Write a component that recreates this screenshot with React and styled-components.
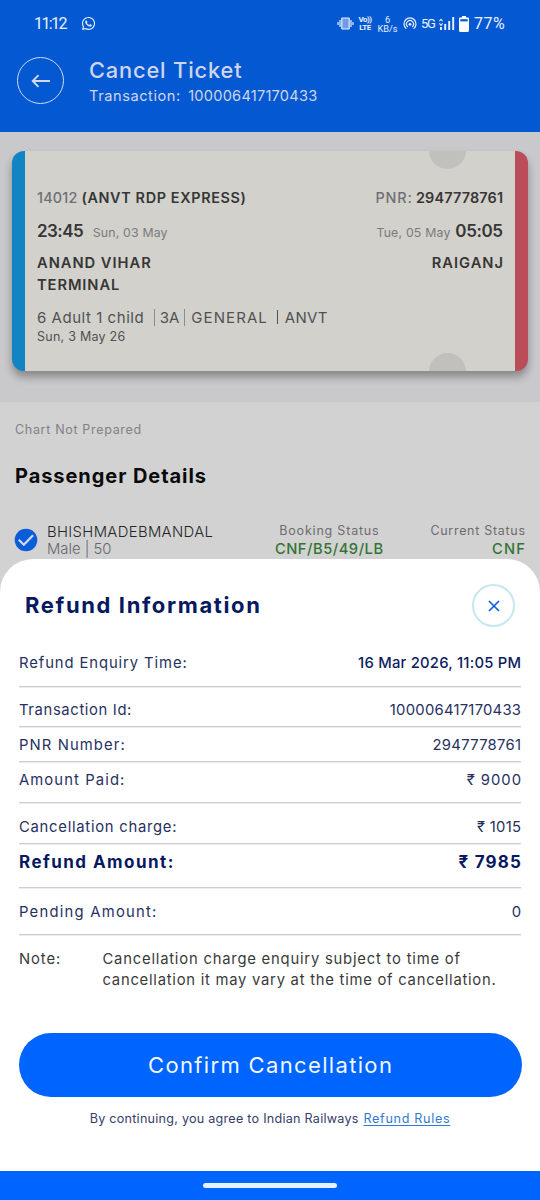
import React from 'react'
import styled, { createGlobalStyle } from 'styled-components'
import { FaWhatsapp } from 'react-icons/fa'

const GlobalStyle = createGlobalStyle`
    * {
        box-sizing: border-box;
    }
    body {
        margin: 0;
        background: #fff;
        font-family: 'Inter', sans-serif;
    }
`

const Screen = styled.div`
    position: relative;
    width: 540px;
    height: 1200px;
    overflow: hidden;
    background: #d2d2d2;
`

const Text = styled.span`
    font-size: ${props => props.$size || 14.8}px;
    font-weight: ${props => props.$weight || 400};
    letter-spacing: ${props => props.$ls || 0}px;
    margin-right: ${props => -(props.$ls || 0)}px;
    color: ${props => props.$color || 'inherit'};
    white-space: pre;
`

/* header */

const Header = styled.header`
    height: 132px;
    background: #0459d2;
    color: #cfd5ea;
`

const StatusBar = styled.div`
    height: 47px;
    padding: 0 35px 0 34px;
    display: flex;
    align-items: center;
    justify-content: space-between;
    color: #e9f1ff;
`

const StatusGroup = styled.div`
    display: flex;
    align-items: center;
    gap: ${props => props.$gap}px;
    svg {
        display: block;
    }
`

const StatusText = styled.span`
    font-family: 'Roboto', sans-serif;
    font-size: ${props => props.$size}px;
    letter-spacing: ${props => props.$ls || 0}px;
    width: ${props => props.$width}px;
    white-space: nowrap;
`

const Stacked = styled.div`
    display: flex;
    flex-direction: column;
    align-items: center;
    width: ${props => props.$width}px;
    font: ${props => props.$weight || 400} ${props => props.$size}px/${props => props.$line}px 'Roboto', sans-serif;
    letter-spacing: ${props => props.$ls || 0}px;
    white-space: nowrap;
`

const TitleBar = styled.div`
    display: flex;
    align-items: center;
    padding: 8px 0 0 17px;
    gap: 25px;
`

const BackButton = styled.button`
    width: 47px;
    height: 47px;
    margin-bottom: 1px;
    padding: 0;
    border: 1.5px solid #cfd9f0;
    border-radius: 50%;
    background: none;
    display: grid;
    place-items: center;
`

const TitleText = styled.div`
    display: flex;
    flex-direction: column;
`

const Title = styled.h1`
    margin: 0;
    font-size: 21.8px;
    font-weight: 500;
    line-height: 30px;
    letter-spacing: .85px;
`

const Subtitle = styled.div`
    display: flex;
    gap: 8px;
    line-height: 22px;
`

/* ticket */

const TicketArea = styled.section`
    height: 270px;
    padding: 19px 12px 0;
    background: #c9c9cb;
`

const Ticket = styled.div`
    position: relative;
    height: 220px;
    padding: 35px 12px 0;
    border-left: 13px solid #1283c3;
    border-right: 13px solid #ba4d59;
    border-radius: 12px;
    background: #d2d1cc;
    background-clip: padding-box;
    box-shadow: 0 6px 9px rgba(0, 0, 0, .32);
    overflow: hidden;
    color: #363636;
`

const Notch = styled.div`
    position: absolute;
    right: 49px;
    ${props => props.$bottom ? 'bottom: -19px' : 'top: -19px'};
    width: 37px;
    height: 37px;
    border-radius: 50%;
    background: #c1c0bd;
`

const TicketRow = styled.div`
    display: flex;
    align-items: ${props => props.$align || 'center'};
    justify-content: space-between;
    height: ${props => props.$height}px;
`

const Inline = styled.div`
    display: flex;
    align-items: baseline;
    gap: ${props => props.$gap}px;
`

const Station = styled.div`
    line-height: 21px;
`

const InfoRow = styled.div`
    display: flex;
    align-items: center;
    height: 22px;
    color: #515151;
`

const BoardingDate = styled.div`
    display: flex;
    line-height: 18px;
    color: #515151;
`

const Divider = styled.span`
    width: 1px;
    height: ${props => props.$height || 17}px;
    margin: ${props => props.$margin};
    background: ${props => props.$color || '#8c8c8a'};
`

/* passengers */

const Passengers = styled.section`
    display: flex;
    flex-direction: column;
    padding: 19px 15px 0;
`

const ChartStatus = styled.div`
    display: flex;
    line-height: 18px;
    color: #818185;
`

const SectionTitle = styled.h2`
    margin: 22px 0 0;
    font-size: 20px;
    font-weight: 700;
    line-height: 30px;
    letter-spacing: .94px;
    color: #0a0a0a;
`

const PassengerRow = styled.div`
    display: flex;
    margin-top: 30px;
`

const CheckIcon = styled.svg`
    margin: 7px 9px 0 -1px;
    flex: none;
`

const Column = styled.div`
    display: flex;
    flex-direction: column;
    align-items: ${props => props.$align || 'flex-start'};
    width: ${props => props.$width}px;
    padding-top: ${props => props.$top || 0}px;
    line-height: ${props => props.$line || 19}px;
`

/* refund sheet */

const Sheet = styled.section`
    position: absolute;
    left: 0;
    right: 0;
    top: 559px;
    height: 612px;
    padding: 0 19px;
    border-radius: 33px 33px 0 0;
    background: #fff;
    color: #27315f;
`

const SheetHeader = styled.div`
    display: flex;
    align-items: center;
    justify-content: space-between;
    height: 43px;
    margin: 25px 6px 0;
    color: #06185f;
`

const SheetTitle = styled.div`
    display: flex;
    padding-bottom: 2px;
`

const CloseButton = styled.button`
    width: 43px;
    height: 43px;
    padding: 0;
    border: 2px solid #c6e7ed;
    border-radius: 50%;
    background: #fff;
    display: grid;
    place-items: center;
`

const RefundRow = styled.div`
    display: flex;
    justify-content: space-between;
    height: ${props => props.$height}px;
    padding-top: ${props => props.$top}px;
    border-bottom: 1px solid #cdcdcf;
    box-shadow: 0 1px 0 #ededee;
    line-height: 20px;
`

const Note = styled.div`
    display: grid;
    grid-template-columns: 83.5px 1fr;
    margin-top: 14px;
    line-height: 21px;
    color: #3a3a3a;
`

const NoteBody = styled.div`
    display: flex;
    flex-direction: column;
`

const ConfirmButton = styled.button`
    display: block;
    width: 503px;
    height: 64px;
    margin: 42px -0.5px 0;
    padding: 0;
    border: 0;
    border-radius: 32px;
    background: #0065ff;
    color: #f1f6ff;
    font-family: inherit;
`

const Terms = styled.p`
    display: flex;
    justify-content: center;
    gap: 5px;
    margin: 12px 0 0;
    line-height: 20px;
    color: #35406b;
`

const RulesLink = styled.a`
    font-size: 12.6px;
    letter-spacing: .68px;
    color: #3479d0;
    text-decoration: underline;
    text-underline-offset: 2px;
`

const NavBar = styled.div`
    position: absolute;
    left: 0;
    right: 0;
    bottom: 0;
    height: 29px;
    padding-top: 12px;
    background: #0065ff;
`

const NavPill = styled.div`
    width: 134px;
    height: 5px;
    margin: 0 auto;
    border-radius: 3px;
    background: #e6f1ff;
`

const VibrateIcon = () => (
    <svg width="17" height="13" viewBox="0 0 17 13" fill="none" stroke="currentColor" strokeWidth="1.2">
        <rect x="4.8" y="1" width="7.4" height="11" rx=".5" fill="#6c9ce6" />
        <path d="M3 3v7M1 5v3M14 3v7M16 5v3" />
    </svg>
)

const HotspotIcon = () => (
    <svg width="14" height="13" viewBox="0 0 14 13" fill="none" stroke="currentColor" strokeWidth="1.2" strokeLinecap="round">
        <path d="M3 11.4a6 6 0 1 1 8 0" />
        <path d="M4.5 9.6a3.5 3.5 0 1 1 5 0" />
        <circle cx="7" cy="7.3" r="1.4" fill="currentColor" stroke="none" />
    </svg>
)

const SignalIcon = () => (
    <svg width="16" height="13" viewBox="0 0 16 13" fill="none" stroke="currentColor" strokeWidth="1.9">
        <path d="M2 10v3M6.200 7v6M10.200 4v9M14.200 0v13" />
        <path d="M.4 4.200L2 2.300l1.600 1.900M.4 6.400L2 8.300l1.600-1.900" strokeWidth="1.100" />
    </svg>
)

const BatteryIcon = () => (
    <svg width="10" height="16" viewBox="0 0 10 16">
        <path d="M3 0h4v1.6h1.8c.7 0 1.2.5 1.2 1.2v12c0 .7-.5 1.2-1.2 1.2H1.2C.5 16 0 15.5 0 14.8v-12c0-.7.5-1.200 1.200-1.200H3z" fill="#fff" />
        <path d="M1.300 3.200h7.400v2.200H1.300z" fill="#0459d2" />
    </svg>
)

const refundRows = [
    { label: 'Refund Enquiry Time:', ls: .91, value: '16 Mar 2026, 11:05 PM', valueLs: .23, valueWeight: 500, valueColor: '#0d1c5f', top: 26, height: 60 },
    { label: 'Transaction Id:', ls: .64, value: '100006417170433', valueLs: .26, top: 13, height: 40 },
    { label: 'PNR Number:', ls: 1.1, value: '2947778761', valueLs: .3, top: 8, height: 35 },
    { label: 'Amount Paid:', ls: 1.1, value: '₹ 9000', valueLs: 1, top: 8, height: 41 },
    { label: 'Cancellation charge:', ls: .74, value: '₹ 1015', valueLs: .29, top: 14, height: 41 },
    { label: 'Refund Amount:', ls: 1.45, value: '₹ 7985', valueLs: 1.2, size: 17, weight: 700, valueWeight: 700, color: '#06185f', valueColor: '#06185f', top: 8, height: 44 },
    { label: 'Pending Amount:', ls: 1.24, value: '0', valueLs: 0, top: 14, height: 47 },
]

function Status() {
    return (
        <StatusBar>
            <StatusGroup $gap={14}>
                <StatusText $size={16} $ls={-1.6} $width={33}>11:12</StatusText>
                <FaWhatsapp size={15} />
            </StatusGroup>
            <StatusGroup $gap={4}>
                <VibrateIcon />
                <Stacked $width={14} $size={8} $line={8} $weight={700} $ls={-.5}>
                    <span>Vo))</span>
                    <span>LTE</span>
                </Stacked>
                <Stacked $width={23} $size={9.2} $line={9}>
                    <span>6</span>
                    <span>KB/s</span>
                </Stacked>
                <HotspotIcon />
                <StatusText $size={13} $ls={-1.2} $width={14}>5G</StatusText>
                <SignalIcon />
                <StatusGroup $gap={5}>
                    <BatteryIcon />
                    <StatusText $size={16} $ls={.5} $width={31}>77%</StatusText>
                </StatusGroup>
            </StatusGroup>
        </StatusBar>
    )
}

function TicketCard() {
    return (
        <Ticket>
            <Notch />
            <Notch $bottom />
            <TicketRow $height={23}>
                <Inline $gap={4}>
                    <Text $size={14.4} $weight={500} $ls={.21} $color="#6f6f75">14012</Text>
                    <Text $size={14.4} $weight={600} $ls={.64}>(ANVT RDP EXPRESS)</Text>
                </Inline>
                <Inline $gap={4}>
                    <Text $size={14.4} $weight={500} $ls={.9} $color="#6f6f75">PNR:</Text>
                    <Text $size={14.4} $weight={600} $ls={.17}>2947778761</Text>
                </Inline>
            </TicketRow>
            <TicketRow $height={43}>
                <Inline $gap={9}>
                    <Text $size={17} $weight={600} $ls={-.55}>23:45</Text>
                    <Text $size={12.3} $ls={.19} $color="#7b7b7b">Sun, 03 May</Text>
                </Inline>
                <Inline $gap={5}>
                    <Text $size={12.3} $ls={.2} $color="#7b7b7b">Tue, 05 May</Text>
                    <Text $size={17} $weight={600} $ls={-.39}>05:05</Text>
                </Inline>
            </TicketRow>
            <TicketRow $height={54} $align="flex-start">
                <Station>
                    <Text $size={14.7} $weight={600} $ls={.98}>ANAND VIHAR</Text>
                    <br />
                    <Text $size={14.7} $weight={600} $ls={.91}>TERMINAL</Text>
                </Station>
                <Station>
                    <Text $size={14.7} $weight={600} $ls={1}>RAIGANJ</Text>
                </Station>
            </TicketRow>
            <InfoRow>
                <Text $size={15} $ls={.54}>6 Adult 1 child</Text>
                <Divider $margin="0 5px 0 10px" />
                <Text $size={15}>3A</Text>
                <Divider $margin="0 6px 0 5px" />
                <Text $size={15} $ls={1.08}>GENERAL</Text>
                <Divider $height={14} $margin="0 7px 0 10px" $color="#515151" />
                <Text $size={15} $ls={.33}>ANVT</Text>
            </InfoRow>
            <BoardingDate>
                <Text $size={12.5} $ls={.25}>Sun, 3 May 26</Text>
            </BoardingDate>
        </Ticket>
    )
}

function PassengerList() {
    return (
        <Passengers>
            <ChartStatus>
                <Text $size={12.5} $ls={.68}>Chart Not Prepared</Text>
            </ChartStatus>
            <SectionTitle>Passenger Details</SectionTitle>
            <PassengerRow>
                <CheckIcon width="24" height="24" viewBox="0 0 24 24" fill="none">
                    <circle cx="12" cy="12" r="11.3" fill="#0b5cd8" />
                    <path d="M4.8 11.8l5 5 9.3-9.5" stroke="#d5dcec" strokeWidth="2.2" />
                </CheckIcon>
                <Column $width={216} $top={3} $line={17}>
                    <Text $weight={300} $ls={.38} $color="#262626">BHISHMADEBMANDAL</Text>
                    <Text $weight={300} $color="#66666b">Male | 50</Text>
                </Column>
                <Column $width={132} $align="center">
                    <Text $size={12.5} $ls={.8} $color="#6d6d6d">Booking Status</Text>
                    <Text $size={14.7} $weight={500} $ls={.52} $color="#327532">CNF/B5/49/LB</Text>
                </Column>
                <Column $width={130} $align="flex-end">
                    <Text $size={12.5} $ls={.7} $color="#6d6d6d">Current Status</Text>
                    <Text $size={14.7} $weight={500} $ls={1.2} $color="#327532">CNF</Text>
                </Column>
            </PassengerRow>
        </Passengers>
    )
}

function RefundSheet() {
    return (
        <Sheet>
            <SheetHeader>
                <SheetTitle>
                    <Text $size={22} $weight={700} $ls={1.62}>Refund Information</Text>
                </SheetTitle>
                <CloseButton>
                    <svg width="12" height="12" viewBox="0 0 12 12" stroke="#0b5be0" strokeWidth="1.6">
                        <path d="M1 1l10 10M11 1L1 11" />
                    </svg>
                </CloseButton>
            </SheetHeader>

            {refundRows.map(row => (
                <RefundRow key={row.label} $top={row.top} $height={row.height}>
                    <Text $size={row.size} $weight={row.weight} $ls={row.ls} $color={row.color}>{row.label}</Text>
                    <Text $size={row.size} $weight={row.valueWeight} $ls={row.valueLs} $color={row.valueColor}>{row.value}</Text>
                </RefundRow>
            ))}

            <Note>
                <Text $ls={.91}>Note:</Text>
                <NoteBody>
                    <Text $ls={.79}>Cancellation charge enquiry subject to time of</Text>
                    <Text $ls={.75}>cancellation it may vary at the time of cancellation.</Text>
                </NoteBody>
            </Note>

            <ConfirmButton>
                <Text $size={22} $ls={1.34}>Confirm Cancellation</Text>
            </ConfirmButton>
            <Terms>
                <Text $size={12.6} $ls={.25}>By continuing, you agree to Indian Railways</Text>
                <RulesLink>Refund Rules</RulesLink>
            </Terms>
        </Sheet>
    )
}

export default function App() {
    return (
        <Screen>
            <GlobalStyle />
            <Header>
                <Status />
                <TitleBar>
                    <BackButton>
                        <svg width="20" height="14" viewBox="0 0 20 14" fill="none" stroke="#d3d9ea" strokeWidth="1.9">
                            <path d="M19 7H2M7.5 1.2L1.7 7l5.8 5.8" />
                        </svg>
                    </BackButton>
                    <TitleText>
                        <Title>Cancel Ticket</Title>
                        <Subtitle>
                            <Text $size={14.6} $ls={.56}>Transaction:</Text>
                            <Text $size={14.6} $ls={.23}>100006417170433</Text>
                        </Subtitle>
                    </TitleText>
                </TitleBar>
            </Header>
            <TicketArea>
                <TicketCard />
            </TicketArea>
            <PassengerList />
            <RefundSheet />
            <NavBar>
                <NavPill />
            </NavBar>
        </Screen>
    )
}
